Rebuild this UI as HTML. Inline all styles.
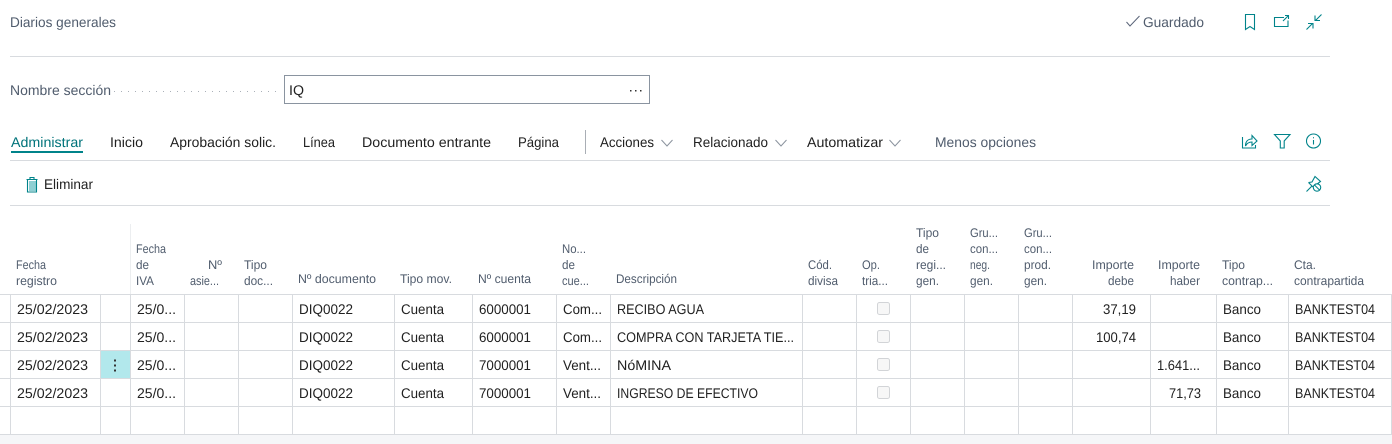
<!DOCTYPE html>
<html lang="es"><head><meta charset="utf-8"><title>Diarios generales</title>
<style>
html,body{margin:0;padding:0;background:#fff;width:1392px;height:444px;overflow:hidden}
svg{display:block}
text{font-family:"Liberation Sans",sans-serif;font-size:14px;fill:#212121;text-rendering:geometricPrecision}
.s{fill:#505c6d}
.h{font-size:12.5px;fill:#505c6d}
.i{fill:none;stroke:#00838a;stroke-width:1.1}
.l{stroke:#d8dbdf;stroke-width:1}
</style></head><body>
<svg width="1392" height="444" viewBox="0 0 1392 444" xmlns="http://www.w3.org/2000/svg">
<rect x="0" y="435" width="1392" height="9" fill="#f5f6f8"/>
<text class="s" x="10" y="27" textLength="106" lengthAdjust="spacingAndGlyphs">Diarios generales</text>
<path d="M1126.500 22l3.500 4 9.500-10" fill="none" stroke="#5a6478" stroke-width="1"/>
<text class="s" x="1143" y="27" textLength="61" lengthAdjust="spacingAndGlyphs">Guardado</text>
<path class="i" d="M1245.500 14.500h9v15l-4.500-3-4.500 3z"/>
<path class="i" d="M1284 17.500h-9.500v9h13.500v-6M1283 21l5-5M1285 15.500h3.500v3.500"/>
<path class="i" d="M1306.500 29.500l6-6M1308 23.500h5v5M1321.500 14.500l-6 6M1315 15.500v5h5"/>
<line class="l" x1="10" y1="56.500" x2="1330" y2="56.500"/>

<text class="s" x="10" y="95" textLength="101" lengthAdjust="spacingAndGlyphs">Nombre sección</text>
<line x1="114" y1="91.500" x2="281" y2="91.500" stroke="#aab0b8" stroke-width="1" stroke-dasharray="1 6"/>
<rect x="284.500" y="75.500" width="365" height="28" fill="#fff" stroke="#8a94a0"/>
<text x="289" y="95" textLength="15" lengthAdjust="spacingAndGlyphs">IQ</text>
<g fill="#333"><rect x="630" y="90" width="1.500" height="1.500"/><rect x="635" y="90" width="1.500" height="1.500"/><rect x="640" y="90" width="1.500" height="1.500"/></g>

<text x="11" y="147" style="fill:#00737a" textLength="72" lengthAdjust="spacingAndGlyphs">Administrar</text>
<rect x="11" y="151" width="72" height="2" fill="#00838a"/>
<text x="110" y="147" textLength="33" lengthAdjust="spacingAndGlyphs">Inicio</text>
<text x="170" y="147" textLength="106" lengthAdjust="spacingAndGlyphs">Aprobación solic.</text>
<text x="303" y="147" textLength="32" lengthAdjust="spacingAndGlyphs">Línea</text>
<text x="362" y="147" textLength="129" lengthAdjust="spacingAndGlyphs">Documento entrante</text>
<text x="518" y="147" textLength="41" lengthAdjust="spacingAndGlyphs">Página</text>
<rect x="585" y="130" width="1" height="24" fill="#a9aeb5"/>
<text x="600" y="147" textLength="54" lengthAdjust="spacingAndGlyphs">Acciones</text>
<path d="M661.500 140l5.500 6 5.500-6" fill="none" stroke="#8a929d"/>
<text x="693" y="147" textLength="75" lengthAdjust="spacingAndGlyphs">Relacionado</text>
<path d="M775.500 140l5.500 6 5.500-6" fill="none" stroke="#8a929d"/>
<text x="807" y="147" textLength="76" lengthAdjust="spacingAndGlyphs">Automatizar</text>
<path d="M889.500 140l5.500 6 5.500-6" fill="none" stroke="#8a929d"/>
<text class="s" x="935" y="147" textLength="101" lengthAdjust="spacingAndGlyphs">Menos opciones</text>

<path class="i" d="M1242.500 137v11h13v-3M1245.500 146c0-4.500 2.500-7 6.500-7v-3.500l5 5.500-5 4.500v-3.500c-3 0-5 1-6.500 4z"/>
<path class="i" d="M1274.500 134.500h15.500l-5.800 6.500v7h-3.900v-7z"/>
<circle class="i" cx="1313.500" cy="141" r="7"/>
<path d="M1313.500 140v4.500" stroke="#00838a" stroke-width="1.100"/><rect x="1313" y="137.200" width="1" height="1.100" fill="#00838a"/>
<line class="l" x1="10" y1="160.500" x2="1330" y2="160.500"/>

<path d="M29 181h7v10h-7z" fill="#8fcfd3"/>
<path class="i" d="M26.500 179.500h11M27.500 179.500v12.500h9v-12.500M30 179.500v-2h4v2"/>
<text x="44" y="189" textLength="49" lengthAdjust="spacingAndGlyphs">Eliminar</text>
<path class="i" d="M1306.500 191.500l5.500-5.500M1308.500 182.500l3.500-.5 3-5.500 5.500 5-4 3M1308.500 182.500l4.500 4.500"/>
<circle cx="1317" cy="187.500" r="3.700" fill="#fff" stroke="#00838a" stroke-width="1.100"/>
<path d="M1314.500 185l5 5" stroke="#00838a"/>
<line class="l" x1="10" y1="205.500" x2="1330" y2="205.500"/>

<!-- header -->
<rect x="130" y="224" width="1" height="70" fill="#eceef0"/>
<g class="hdr">
<text class="h" x="16" y="269" textLength="30" lengthAdjust="spacingAndGlyphs">Fecha</text>
<text class="h" x="16" y="285" textLength="41" lengthAdjust="spacingAndGlyphs">registro</text>
<text class="h" x="136" y="253" textLength="30" lengthAdjust="spacingAndGlyphs">Fecha</text>
<text class="h" x="136" y="269" textLength="13" lengthAdjust="spacingAndGlyphs">de</text>
<text class="h" x="136" y="285" textLength="18" lengthAdjust="spacingAndGlyphs">IVA</text>
<text class="h" x="208" y="269" textLength="14" lengthAdjust="spacingAndGlyphs">Nº</text>
<text class="h" x="190" y="285" textLength="29" lengthAdjust="spacingAndGlyphs">asie...</text>
<text class="h" x="244" y="269" textLength="23" lengthAdjust="spacingAndGlyphs">Tipo</text>
<text class="h" x="244" y="285" textLength="29" lengthAdjust="spacingAndGlyphs">doc...</text>
<text class="h" x="298" y="283" textLength="78" lengthAdjust="spacingAndGlyphs">Nº documento</text>
<text class="h" x="400" y="283" textLength="52" lengthAdjust="spacingAndGlyphs">Tipo mov.</text>
<text class="h" x="478" y="283" textLength="53" lengthAdjust="spacingAndGlyphs">Nº cuenta</text>
<text class="h" x="562" y="253" textLength="24" lengthAdjust="spacingAndGlyphs">No...</text>
<text class="h" x="562" y="269" textLength="13" lengthAdjust="spacingAndGlyphs">de</text>
<text class="h" x="562" y="285" textLength="27" lengthAdjust="spacingAndGlyphs">cue...</text>
<text class="h" x="616" y="283" textLength="61" lengthAdjust="spacingAndGlyphs">Descripción</text>
<text class="h" x="808" y="269" textLength="24" lengthAdjust="spacingAndGlyphs">Cód.</text>
<text class="h" x="808" y="285" textLength="30" lengthAdjust="spacingAndGlyphs">divisa</text>
<text class="h" x="862" y="269" textLength="18" lengthAdjust="spacingAndGlyphs">Op.</text>
<text class="h" x="862" y="285" textLength="26" lengthAdjust="spacingAndGlyphs">tria...</text>
<text class="h" x="916" y="237" textLength="23" lengthAdjust="spacingAndGlyphs">Tipo</text>
<text class="h" x="916" y="253" textLength="13" lengthAdjust="spacingAndGlyphs">de</text>
<text class="h" x="916" y="269" textLength="30" lengthAdjust="spacingAndGlyphs">regi...</text>
<text class="h" x="916" y="285" textLength="23" lengthAdjust="spacingAndGlyphs">gen.</text>
<text class="h" x="970" y="237" textLength="28" lengthAdjust="spacingAndGlyphs">Gru...</text>
<text class="h" x="970" y="253" textLength="28" lengthAdjust="spacingAndGlyphs">con...</text>
<text class="h" x="970" y="269" textLength="20" lengthAdjust="spacingAndGlyphs">neg.</text>
<text class="h" x="970" y="285" textLength="23" lengthAdjust="spacingAndGlyphs">gen.</text>
<text class="h" x="1024" y="237" textLength="28" lengthAdjust="spacingAndGlyphs">Gru...</text>
<text class="h" x="1024" y="253" textLength="28" lengthAdjust="spacingAndGlyphs">con...</text>
<text class="h" x="1024" y="269" textLength="27" lengthAdjust="spacingAndGlyphs">prod.</text>
<text class="h" x="1024" y="285" textLength="23" lengthAdjust="spacingAndGlyphs">gen.</text>
<text class="h" x="1092" y="269" textLength="42" lengthAdjust="spacingAndGlyphs">Importe</text>
<text class="h" x="1108" y="285" textLength="26" lengthAdjust="spacingAndGlyphs">debe</text>
<text class="h" x="1158" y="269" textLength="42" lengthAdjust="spacingAndGlyphs">Importe</text>
<text class="h" x="1170" y="285" textLength="30" lengthAdjust="spacingAndGlyphs">haber</text>
<text class="h" x="1222" y="269" textLength="23" lengthAdjust="spacingAndGlyphs">Tipo</text>
<text class="h" x="1222" y="285" textLength="51" lengthAdjust="spacingAndGlyphs">contrap...</text>
<text class="h" x="1294" y="269" textLength="22" lengthAdjust="spacingAndGlyphs">Cta.</text>
<text class="h" x="1294" y="285" textLength="70" lengthAdjust="spacingAndGlyphs">contrapartida</text>
</g>

<!-- highlighted cell -->
<rect x="101" y="351" width="29" height="27" fill="#b2e8ec"/>
<g fill="#333"><rect x="114" y="359.500" width="2" height="2"/><rect x="114" y="364.500" width="2" height="2"/><rect x="114" y="369.500" width="2" height="2"/></g>

<!-- grid -->
<g class="l">
<line x1="0" y1="294.500" x2="1392" y2="294.500"/>
<line x1="0" y1="322.500" x2="1392" y2="322.500"/>
<line x1="0" y1="350.500" x2="1392" y2="350.500"/>
<line x1="0" y1="378.500" x2="1392" y2="378.500"/>
<line x1="0" y1="406.500" x2="1392" y2="406.500"/>
<line x1="0" y1="434.500" x2="1392" y2="434.500"/>
<path d="M10.500 294v140M100.500 294v140M130.500 294v140M184.500 294v140M238.500 294v140M292.500 294v140M394.500 294v140M472.500 294v140M556.500 294v140M610.500 294v140M802.500 294v140M856.500 294v140M910.500 294v140M964.500 294v140M1018.500 294v140M1072.500 294v140M1150.500 294v140M1216.500 294v140M1288.500 294v140M1391.500 294v140" fill="none"/>
</g>

<!-- checkboxes -->
<g fill="#f7f7f7" stroke="#d2d4d7">
<rect x="877.500" y="302.500" width="12" height="12" rx="2"/>
<rect x="877.500" y="330.500" width="12" height="12" rx="2"/>
<rect x="877.500" y="358.500" width="12" height="12" rx="2"/>
<rect x="877.500" y="386.500" width="12" height="12" rx="2"/>
</g>

<!-- row 1 -->
<text x="17" y="314" textLength="71" lengthAdjust="spacingAndGlyphs">25/02/2023</text>
<text x="137" y="314" textLength="39" lengthAdjust="spacingAndGlyphs">25/0...</text>
<text x="299" y="314" textLength="54" lengthAdjust="spacingAndGlyphs">DIQ0022</text>
<text x="401" y="314" textLength="43" lengthAdjust="spacingAndGlyphs">Cuenta</text>
<text x="479" y="314" textLength="52" lengthAdjust="spacingAndGlyphs">6000001</text>
<text x="563" y="314" textLength="39" lengthAdjust="spacingAndGlyphs">Com...</text>
<text x="617" y="314" textLength="87" lengthAdjust="spacingAndGlyphs">RECIBO AGUA</text>
<text x="1103" y="314" textLength="33" lengthAdjust="spacingAndGlyphs">37,19</text>
<text x="1223" y="314" textLength="38" lengthAdjust="spacingAndGlyphs">Banco</text>
<text x="1295" y="314" textLength="80" lengthAdjust="spacingAndGlyphs">BANKTEST04</text>
<!-- row 2 -->
<text x="17" y="342" textLength="71" lengthAdjust="spacingAndGlyphs">25/02/2023</text>
<text x="137" y="342" textLength="39" lengthAdjust="spacingAndGlyphs">25/0...</text>
<text x="299" y="342" textLength="54" lengthAdjust="spacingAndGlyphs">DIQ0022</text>
<text x="401" y="342" textLength="43" lengthAdjust="spacingAndGlyphs">Cuenta</text>
<text x="479" y="342" textLength="52" lengthAdjust="spacingAndGlyphs">6000001</text>
<text x="563" y="342" textLength="39" lengthAdjust="spacingAndGlyphs">Com...</text>
<text x="617" y="342" textLength="177" lengthAdjust="spacingAndGlyphs">COMPRA CON TARJETA TIE...</text>
<text x="1096" y="342" textLength="40" lengthAdjust="spacingAndGlyphs">100,74</text>
<text x="1223" y="342" textLength="38" lengthAdjust="spacingAndGlyphs">Banco</text>
<text x="1295" y="342" textLength="80" lengthAdjust="spacingAndGlyphs">BANKTEST04</text>
<!-- row 3 -->
<text x="17" y="370" textLength="71" lengthAdjust="spacingAndGlyphs">25/02/2023</text>
<text x="137" y="370" textLength="39" lengthAdjust="spacingAndGlyphs">25/0...</text>
<text x="299" y="370" textLength="54" lengthAdjust="spacingAndGlyphs">DIQ0022</text>
<text x="401" y="370" textLength="43" lengthAdjust="spacingAndGlyphs">Cuenta</text>
<text x="479" y="370" textLength="52" lengthAdjust="spacingAndGlyphs">7000001</text>
<text x="563" y="370" textLength="38" lengthAdjust="spacingAndGlyphs">Vent...</text>
<text x="617" y="370" textLength="54" lengthAdjust="spacingAndGlyphs">NóMINA</text>
<text x="1157" y="370" textLength="43" lengthAdjust="spacingAndGlyphs">1.641...</text>
<text x="1223" y="370" textLength="38" lengthAdjust="spacingAndGlyphs">Banco</text>
<text x="1295" y="370" textLength="80" lengthAdjust="spacingAndGlyphs">BANKTEST04</text>
<!-- row 4 -->
<text x="17" y="398" textLength="71" lengthAdjust="spacingAndGlyphs">25/02/2023</text>
<text x="137" y="398" textLength="39" lengthAdjust="spacingAndGlyphs">25/0...</text>
<text x="299" y="398" textLength="54" lengthAdjust="spacingAndGlyphs">DIQ0022</text>
<text x="401" y="398" textLength="43" lengthAdjust="spacingAndGlyphs">Cuenta</text>
<text x="479" y="398" textLength="52" lengthAdjust="spacingAndGlyphs">7000001</text>
<text x="563" y="398" textLength="38" lengthAdjust="spacingAndGlyphs">Vent...</text>
<text x="617" y="398" textLength="141" lengthAdjust="spacingAndGlyphs">INGRESO DE EFECTIVO</text>
<text x="1169" y="398" textLength="32" lengthAdjust="spacingAndGlyphs">71,73</text>
<text x="1223" y="398" textLength="38" lengthAdjust="spacingAndGlyphs">Banco</text>
<text x="1295" y="398" textLength="80" lengthAdjust="spacingAndGlyphs">BANKTEST04</text>
</svg>
</body></html>
